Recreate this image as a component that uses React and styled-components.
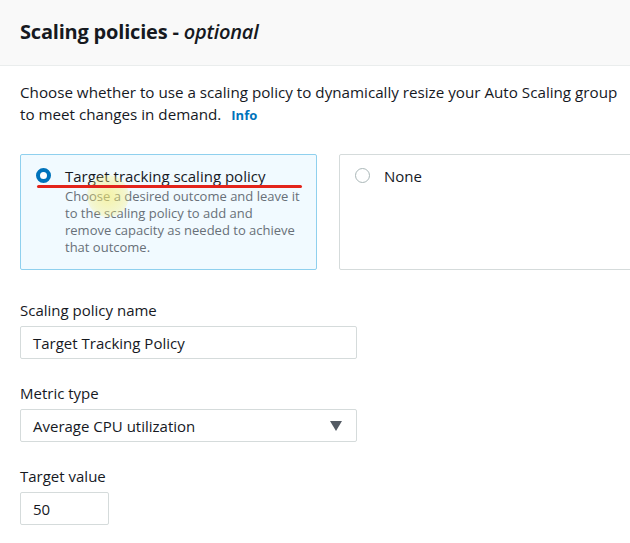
import React from "react";
import styled, { createGlobalStyle } from "styled-components";

const Global = createGlobalStyle`
  html, body { margin: 0; padding: 0; background: #ffffff; }
  body { font-family: "Open Sans", "Noto Sans", Arial, sans-serif; color: #16191f; overflow: hidden; width: 630px; height: 543px; }
`;

const Page = styled.div`
  width: 630px;
  height: 543px;
  overflow: hidden;
  position: relative;
`;

const Header = styled.div`
  height: 65px;
  background: #f9f9f9;
  border-bottom: 1px solid #eaeded;
  display: flex;
  align-items: center;
  padding: 0 20px;
`;

const Title = styled.h2`
  margin: 0;
  margin-top: -2px;
  font-size: 20px;
  font-weight: 700;
  letter-spacing: -0.2px;
  color: #16191f;
  em { font-style: italic; font-weight: 600; }
`;

const Body = styled.div`
  padding: 15px 20px 0 20px;
  display: flex;
  flex-direction: column;
`;

const Intro = styled.p`
  margin: 0;
  font-size: 15.2px;
  line-height: 22px;
  color: #16191f;
  white-space: nowrap;
`;

const InfoLink = styled.a`
  color: #0073bb;
  font-weight: 700;
  font-size: 13px;
  margin-left: 10px;
  text-decoration: none;
`;

const Cards = styled.div`
  display: grid;
  grid-template-columns: 297px 297px;
  column-gap: 22px;
  margin-top: 28px;
`;

const Card = styled.label`
  position: relative;
  height: 116px;
  box-sizing: border-box;
  border: 1px solid ${(p) => (p.$selected ? "#8fd0ee" : "#d5dbdb")};
  background: ${(p) => (p.$selected ? "#f1faff" : "#ffffff")};
  border-radius: 2px;
  padding: 11px 16px 0 15px;
  display: grid;
  grid-template-columns: 15px 1fr;
  column-gap: 14px;
  align-content: start;
`;

const Radio = styled.span`
  width: 15px;
  height: 15px;
  box-sizing: border-box;
  border-radius: 50%;
  margin-top: 2px;
  border: ${(p) => (p.$checked ? "4.5px solid #0073bb" : "1.5px solid #aab7b8")};
  background: #fff;
`;

const CardText = styled.div`
  display: flex;
  flex-direction: column;
`;

const CardTitle = styled.span`
  font-size: 15px;
  line-height: 20px;
  color: #16191f;
  margin-bottom: 2px;
`;

const CardDesc = styled.span`
  font-size: 13px;
  line-height: 17px;
  color: #687078;
  white-space: nowrap;
`;

const Underline = styled.span`
  position: absolute;
  left: 16px;
  top: 30px;
  width: 265px;
  height: 3px;
  border-radius: 2px;
  background: #e3241b;
`;

const Glow = styled.span`
  position: absolute;
  left: 66px;
  top: 20px;
  width: 42px;
  height: 42px;
  border-radius: 50%;
  background: radial-gradient(circle, rgba(248, 238, 110, 0.6) 0%, rgba(248, 238, 110, 0.35) 55%, rgba(248, 238, 110, 0) 100%);
  pointer-events: none;
`;

const Field = styled.div`
  display: flex;
  flex-direction: column;
  margin-top: ${(p) => p.$top}px;
`;

const Label = styled.span`
  font-size: 15px;
  line-height: 20px;
  color: #16191f;
  margin-bottom: 6px;
`;

const InputBox = styled.div`
  width: ${(p) => p.$w}px;
  height: 33px;
  box-sizing: border-box;
  border: 1px solid #d5dbdb;
  border-radius: 2px;
  background: #fff;
  display: flex;
  align-items: center;
  justify-content: space-between;
  padding: 0 14px 0 12px;
  font-size: 15px;
  color: #16191f;
`;

const Caret = styled.svg`
  width: 12px;
  height: 10px;
`;

export default function App() {
  return (
    <Page>
      <Global />
      <Header>
        <Title>
          Scaling policies - <em>optional</em>
        </Title>
      </Header>
      <Body>
        <Intro>
          Choose whether to use a scaling policy to dynamically resize your Auto Scaling group
          <br />
          to meet changes in demand.
          <InfoLink>Info</InfoLink>
        </Intro>
        <Cards>
          <Card $selected>
            <Glow />
            <Radio $checked />
            <CardText>
              <CardTitle>Target tracking scaling policy</CardTitle>
              <CardDesc>
                Choose a desired outcome and leave it
                <br />
                to the scaling policy to add and
                <br />
                remove capacity as needed to achieve
                <br />
                that outcome.
              </CardDesc>
            </CardText>
            <Underline />
          </Card>
          <Card>
            <Radio />
            <CardText>
              <CardTitle>None</CardTitle>
            </CardText>
          </Card>
        </Cards>
        <Field $top={30}>
          <Label>Scaling policy name</Label>
          <InputBox $w={337}>Target Tracking Policy</InputBox>
        </Field>
        <Field $top={24}>
          <Label>Metric type</Label>
          <InputBox $w={337}>
            Average CPU utilization
            <Caret viewBox="0 0 12 10">
              <path d="M0 0 L12 0 L6 10 Z" fill="#545b64" />
            </Caret>
          </InputBox>
        </Field>
        <Field $top={24}>
          <Label>Target value</Label>
          <InputBox $w={89}>50</InputBox>
        </Field>
      </Body>
    </Page>
  );
}
